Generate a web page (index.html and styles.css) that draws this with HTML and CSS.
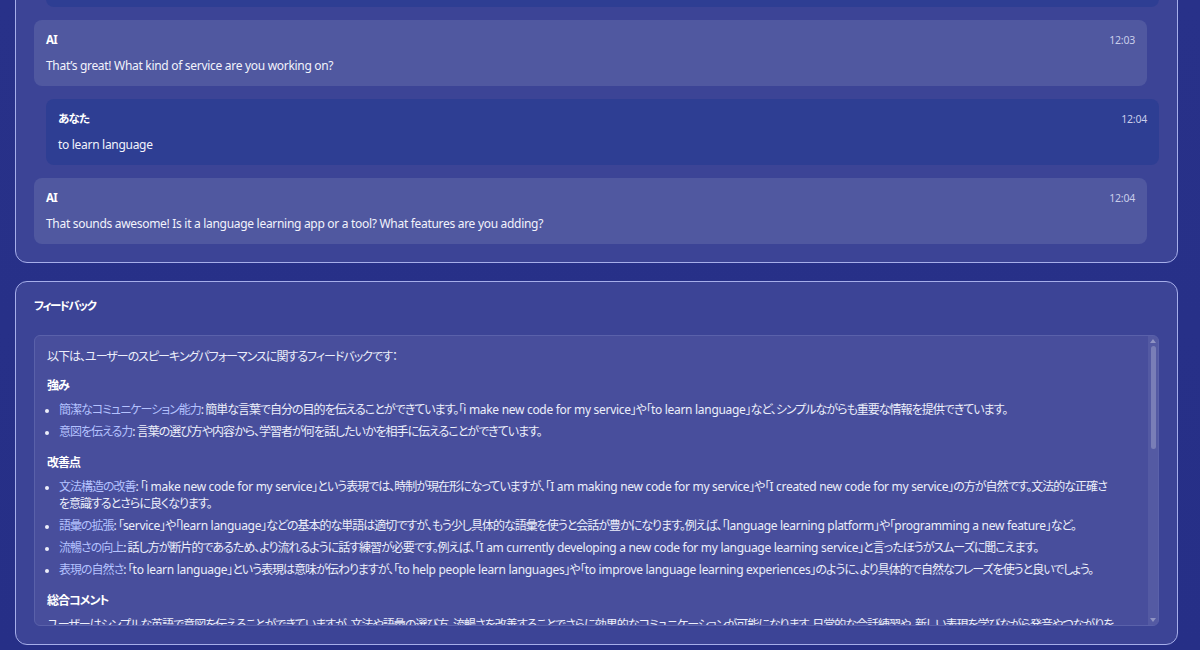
FILE: index.html
```html
<!DOCTYPE html>
<html lang="ja">
<head>
<meta charset="utf-8">
<title>Speaking Practice</title>
<link rel="stylesheet" href="styles.css">
</head>
<body>
<div class="viewport">
  <main class="page">
    <section class="card chat">
      <div class="messages">
        <div class="msg user">
          <div class="msg-head"><span class="who">あなた</span><span class="time">12:03</span></div>
          <p class="msg-text">i make new code for my service</p>
        </div>
        <div class="msg ai">
          <div class="msg-head"><span class="who">AI</span><span class="time">12:03</span></div>
          <p class="msg-text">That’s great! What kind of service are you working on?</p>
        </div>
        <div class="msg user">
          <div class="msg-head"><span class="who">あなた</span><span class="time">12:04</span></div>
          <p class="msg-text">to learn language</p>
        </div>
        <div class="msg ai">
          <div class="msg-head"><span class="who">AI</span><span class="time">12:04</span></div>
          <p class="msg-text">That sounds awesome! Is it a language learning app or a tool? What features are you adding?</p>
        </div>
      </div>
    </section>

    <section class="card feedback">
      <h2 class="card-title">フィードバック</h2>
      <div class="fb-box">
        <div class="fb-content">
          <p>以下は、ユーザーのスピーキングパフォーマンスに関するフィードバックです：</p>
          <h3>強み</h3>
          <ul>
            <li><span class="label">簡潔なコミュニケーション能力</span>: 簡単な言葉で自分の目的を伝えることができています。「<span class="en">i make new code for my service</span>」や「<span class="en">to learn language</span>」など、シンプルながらも重要な情報を提供できています。</li>
            <li><span class="label">意図を伝える力</span>: 言葉の選び方や内容から、学習者が何を話したいかを相手に伝えることができています。</li>
          </ul>
          <h3>改善点</h3>
          <ul>
            <li><span class="label">文法構造の改善</span>: 「<span class="en">i make new code for my service</span>」という表現では、時制が現在形になっていますが、「<span class="en">I am making new code for my service</span>」や「<span class="en">I created new code for my service</span>」の方が自然です。文法的な正確さを意識するとさらに良くなります。</li>
            <li><span class="label">語彙の拡張</span>: 「<span class="en">service</span>」や「<span class="en">learn language</span>」などの基本的な単語は適切ですが、もう少し具体的な語彙を使うと会話が豊かになります。例えば、「<span class="en">language learning platform</span>」や「<span class="en">programming a new feature</span>」など。</li>
            <li><span class="label">流暢さの向上</span>: 話し方が断片的であるため、より流れるように話す練習が必要です。例えば、「<span class="en">I am currently developing a new code for my language learning service</span>」と言ったほうがスムーズに聞こえます。</li>
            <li><span class="label">表現の自然さ</span>: 「<span class="en">to learn language</span>」という表現は意味が伝わりますが、「<span class="en">to help people learn languages</span>」や「<span class="en">to improve language learning experiences</span>」のように、より具体的で自然なフレーズを使うと良いでしょう。</li>
          </ul>
          <h3>総合コメント</h3>
          <p>ユーザーはシンプルな英語で意図を伝えることができていますが、文法や語彙の選び方、流暢さを改善することでさらに効果的なコミュニケーションが可能になります。日常的な会話練習や、新しい表現を学びながら発音やつながりを意識して練習することをお勧めします。</p>
        </div>
        <div class="scrollbar">
          <span class="arrow up"></span>
          <span class="thumb"></span>
          <span class="arrow down"></span>
        </div>
      </div>
    </section>
  </main>
</div>
</body>
</html>
```

FILE: styles.css
```css
* { box-sizing: border-box; }

html, body {
  margin: 0;
  padding: 0;
}

body {
  background: linear-gradient(180deg, #283189 0%, #262f87 100%);
  color: #eceefa;
  font-family: "Noto Sans", "Noto Sans CJK JP", sans-serif;
  font-size: 12px;
  font-feature-settings: "palt";
}

.viewport {
  height: 100vh;
  overflow: hidden;
  display: flex;
  flex-direction: column;
  justify-content: flex-end;
}

.page {
  flex-shrink: 0;
  display: flex;
  flex-direction: column;
  gap: 18px;
  padding: 0 22px 5px 15px;
}

.card {
  background: #3c4496;
  border: 1px solid #a6aeea;
  border-radius: 12px;
  padding: 18px;
}

.messages {
  display: flex;
  flex-direction: column;
  gap: 13px;
}

.msg {
  border-radius: 8px;
  padding: 12px;
}

.msg.ai {
  background: #5058a0;
  margin-right: 12px;
}

.msg.user {
  background: #2e3e93;
  margin-left: 12px;
}

.msg-head {
  display: flex;
  justify-content: space-between;
  align-items: center;
  margin-bottom: 9px;
  line-height: 16px;
}

.who {
  font-weight: 700;
  font-size: 11.5px;
  color: #ffffff;
  letter-spacing: -0.8px;
}

.time {
  font-size: 10.5px;
  color: #c9cdea;
  letter-spacing: -0.2px;
}

.msg-text {
  margin: 0;
  line-height: 17px;
  color: #f2f3fc;
  letter-spacing: -0.3px;
}

.feedback {
  padding: 16px 18px 18px;
}

.card-title {
  margin: 0 0 21px;
  font-size: 11.5px;
  font-weight: 700;
  line-height: 16px;
  color: #ffffff;
  letter-spacing: -1.5px;
}

.fb-box {
  position: relative;
  height: 291px;
  overflow: hidden;
  background: #484e9c;
  border: 1px solid #5a61aa;
  border-radius: 6px;
}

.fb-content {
  padding: 12px 42px 12px 12px;
  line-height: 17px;
  letter-spacing: -1px;
}

.fb-content .en {
  letter-spacing: -0.3px;
}

.fb-content p {
  margin: 0 0 12px;
}

.fb-content h3 {
  margin: 0 0 7px;
  font-size: 12px;
  font-weight: 700;
  line-height: 17px;
  color: #ffffff;
}

.fb-content ul {
  margin: 0 0 14px;
  padding-left: 12px;
}

.fb-content li {
  margin-bottom: 5px;
}

.fb-content li::marker {
  font-size: 10px;
}

.fb-content li:last-child {
  margin-bottom: 0;
}

.label {
  color: #b4c2ff;
}

.scrollbar {
  position: absolute;
  top: 0;
  right: 0;
  bottom: 0;
  width: 10px;
  background: rgba(255, 255, 255, 0.07);
  display: flex;
  flex-direction: column;
  align-items: center;
  padding: 3px 0;
}

.arrow {
  width: 0;
  height: 0;
  border-left: 3px solid transparent;
  border-right: 3px solid transparent;
}

.arrow.up {
  border-bottom: 4px solid rgba(255, 255, 255, 0.35);
}

.arrow.down {
  margin-top: auto;
  border-top: 4px solid rgba(255, 255, 255, 0.35);
}

.thumb {
  margin-top: 3px;
  width: 5px;
  height: 103px;
  border-radius: 3px;
  background: rgba(255, 255, 255, 0.22);
}
```
